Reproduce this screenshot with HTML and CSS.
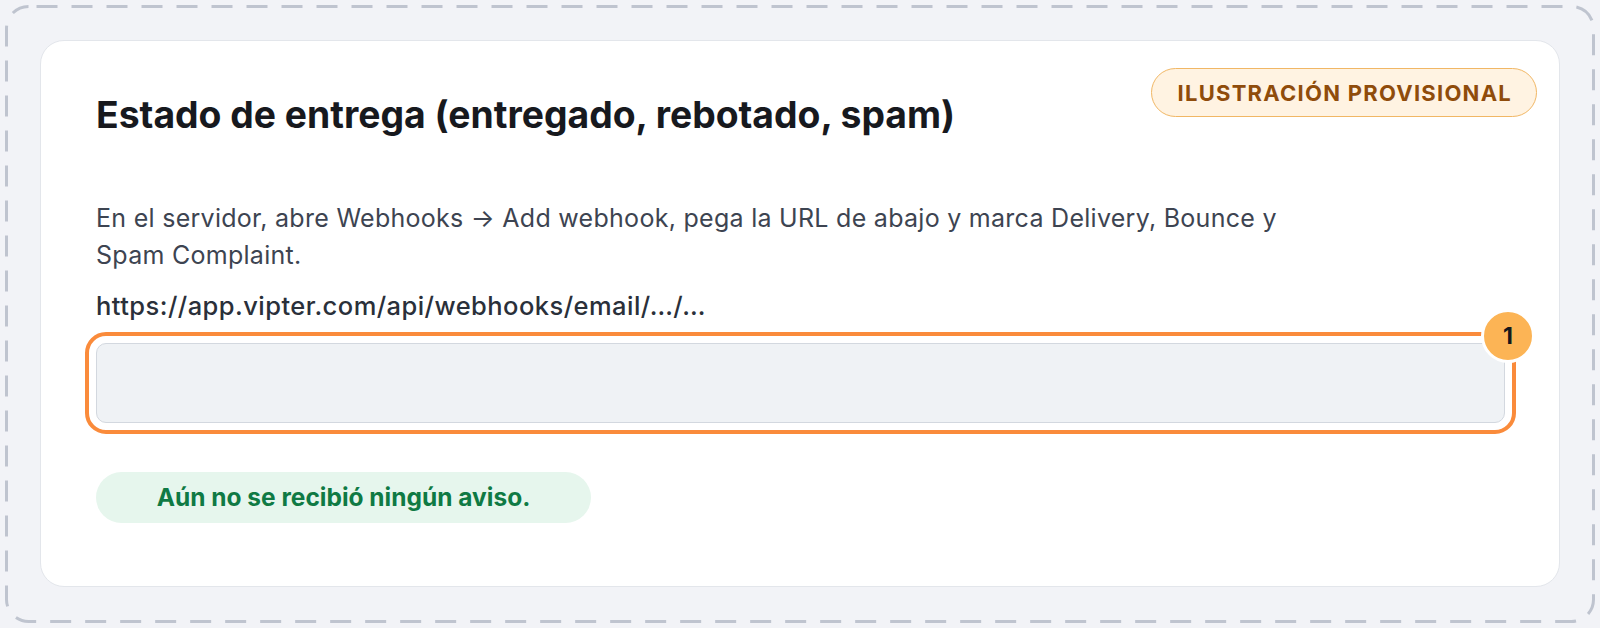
FILE: index.html
```html
<!DOCTYPE html>
<html lang="es">
<head>
<meta charset="utf-8">
<link rel="stylesheet" href="styles.css">
</head>
<body>
<div class="frame">
  <svg class="frame-dash" width="1590" height="618" aria-hidden="true"><rect x="1.5" y="1.5" width="1587" height="615" rx="22" ry="22"/></svg>
  <section class="card">
    <span class="tag">Ilustración provisional</span>
    <h1 class="title">Estado de entrega (entregado, rebotado, spam)</h1>
    <p class="lead">En el servidor, abre Webhooks → Add webhook, pega la URL de abajo y marca Delivery, Bounce y Spam Complaint.</p>
    <p class="url">https://app.vipter.com/api/webhooks/email/…/…</p>
    <div class="field-wrap">
      <div class="field"></div>
      <span class="step">1</span>
    </div>
    <div class="status">Aún no se recibió ningún aviso.</div>
  </section>
</div>
</body>
</html>
```

FILE: styles.css
```css
* { box-sizing: border-box; }
html, body { margin: 0; padding: 0; }
body {
  background: #f2f3f7;
  font-family: "Inter", "Liberation Sans", sans-serif;
  color: #1a1c21;
}
.frame {
  position: relative;
  margin: 5px;
  height: 618px;
  padding: 35px 35px 36px 35px;
}
.frame-dash {
  position: absolute;
  left: 0;
  top: 0;
  pointer-events: none;
}
.frame-dash rect {
  fill: none;
  stroke: #bfc4cf;
  stroke-width: 3;
  stroke-dasharray: 21 14;
  stroke-dashoffset: -8;
}
.card {
  position: relative;
  height: 547px;
  background: #ffffff;
  border: 1px solid #e3e6eb;
  border-radius: 24px;
  padding: 52px 54px 0 55px;
}
.tag {
  position: absolute;
  top: 27px;
  right: 22px;
  height: 49px;
  padding: 0 24px 0 25.5px;
  display: flex;
  align-items: center;
  border: 1.5px solid #f1b765;
  background: #fff3e2;
  border-radius: 25px;
  color: #8f4c0b;
  font-weight: 700;
  font-size: 22px;
  letter-spacing: 1.25px;
  text-transform: uppercase;
}
.title {
  margin: 0 0 62px;
  font-size: 37.3px;
  line-height: 1.2;
  font-weight: 700;
  color: #17191e;
}
.lead {
  margin: 0;
  max-width: 1220px;
  font-size: 25px;
  line-height: 37.5px;
  letter-spacing: 0.28px;
  color: #3d4451;
}
.url {
  margin: 13px 0 19px;
  font-size: 25.5px;
  line-height: 36px;
  font-weight: 500;
  letter-spacing: 0.45px;
  color: #2a303a;
}
.field-wrap {
  position: relative;
}
.field {
  height: 80px;
  background: #eff2f5;
  border: 1.5px solid #d3d8df;
  border-radius: 10px;
  outline: 4px solid #fa8b3b;
  outline-offset: 7px;
}
.step {
  position: absolute;
  top: -34px;
  right: -30px;
  width: 54px;
  height: 54px;
  border-radius: 50%;
  background: #fcb455;
  border: 3px solid #ffffff;
  display: flex;
  align-items: center;
  justify-content: center;
  font-weight: 700;
  font-size: 23px;
  color: #15171b;
}
.status {
  margin-top: 49px;
  display: inline-flex;
  align-items: center;
  justify-content: center;
  height: 51px;
  width: 495px;
  border-radius: 26px;
  background: #e6f6ed;
  color: #0f7a44;
  font-weight: 700;
  font-size: 24.5px;
}
```
